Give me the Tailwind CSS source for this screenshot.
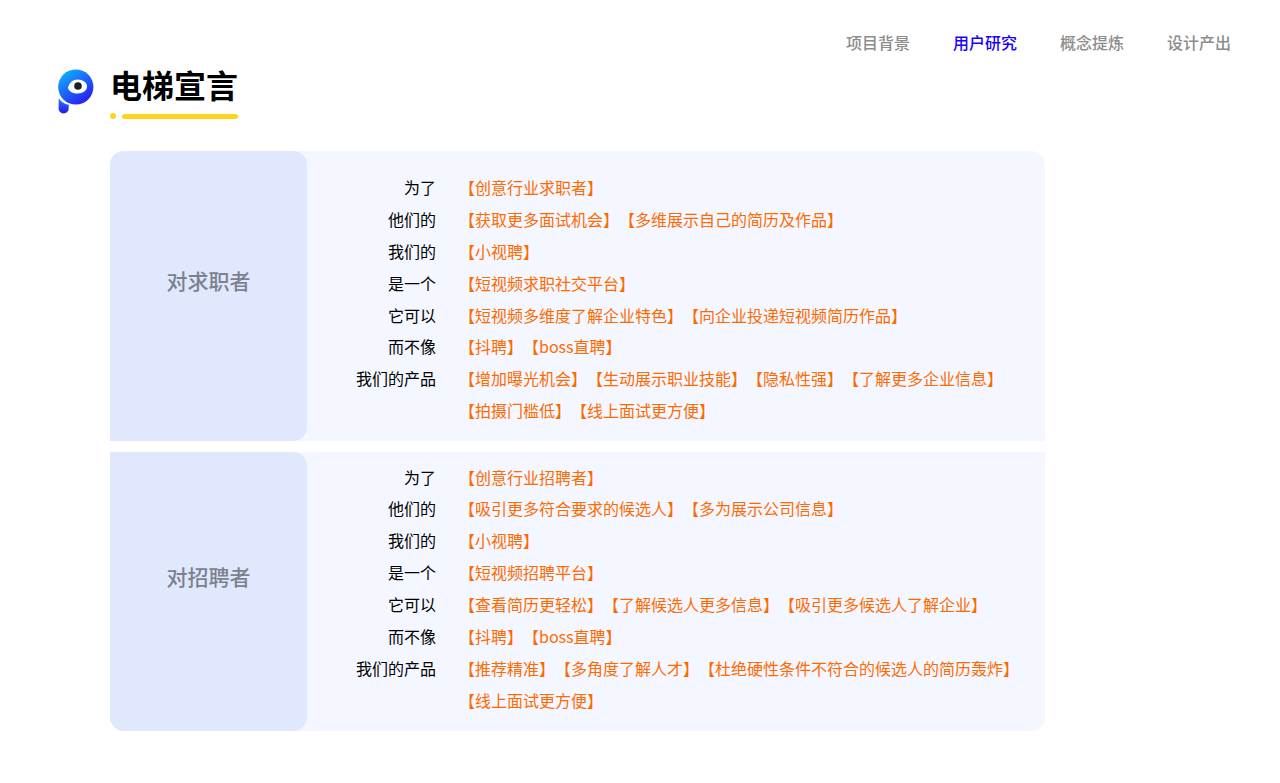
<!DOCTYPE html>
<html lang="zh">
<head>
  <meta charset="UTF-8" />
  <meta name="viewport" content="width=device-width, initial-scale=1.0" />
  <title>电梯宣言</title>
  <script src="https://cdn.jsdelivr.net/npm/@tailwindcss/browser@4"></script>
</head>
<body class="bg-white min-h-screen font-['Noto_Sans_CJK_SC',sans-serif] [text-spacing-trim:space-all] overflow-hidden">
  <nav class="flex justify-end gap-[43px] pt-[30px] pr-[49px] text-base leading-6 font-medium text-[#8c8c8c]">
    <a>项目背景</a>
    <a class="text-[#1a00ff]">用户研究</a>
    <a>概念提炼</a>
    <a>设计产出</a>
  </nav>

  <header class="flex items-start mt-[4px] pl-[58px]">
    <svg class="w-9 h-[46px] mt-[11px]" viewBox="0 0 36 46">
      <defs>
        <linearGradient id="logo" x1="0.15" y1="0" x2="0.85" y2="1">
          <stop offset="0" stop-color="#0fb4ff" />
          <stop offset="1" stop-color="#2a10f0" />
        </linearGradient>
        <linearGradient id="stem" x1="0" y1="0" x2="0" y2="1">
          <stop offset="0" stop-color="#1c8cff" />
          <stop offset="1" stop-color="#2a10e8" />
        </linearGradient>
      </defs>
      <circle cx="17.8" cy="18" r="17.6" fill="url(#logo)" />
      <path d="M0.3 28.5C2.5 32 6.2 34.8 11 35.6V39.3C11 42.4 8.7 44.7 5.6 44.7C2.6 44.7 0.3 42.4 0.3 39.3Z" fill="url(#stem)" stroke="#fff" stroke-width="0.6" />
      <path d="M10 19C11 13.5 15 10.5 19.5 10.5C24.8 10.5 29 13.6 29 17.5C29 21.6 24.8 24.5 19.5 24.5C15 24.5 11.5 23 10 19Z" fill="#fff" />
      <circle cx="20" cy="17" r="3.8" fill="#1c1c2a" />
    </svg>
    <div class="ml-4 w-[128px]">
      <h1 class="text-[32px] leading-[44px] font-bold text-black mt-[4px] whitespace-nowrap">电梯宣言</h1>
      <div class="flex items-center gap-[6px] mt-[7px]">
        <span class="w-[6px] h-[6px] rounded-full bg-[#ffd21f]"></span>
        <span class="w-[116px] h-[5px] rounded-full bg-[#ffd21f]"></span>
      </div>
    </div>
  </header>

  <main class="ml-[110px] w-[935px] mt-[32px] flex flex-col gap-[11px]">
    <section class="flex h-[290px] bg-[#f4f7ff] rounded-t-[14px]">
      <div class="w-[197px] pb-[30px] flex items-center justify-center bg-[#e0e8fd] rounded-tl-[14px] rounded-tr-[14px] rounded-br-[14px] text-[21px] font-medium text-[#7c818e]">对求职者</div>
      <div class="pt-[20px] grid grid-cols-[129px_1fr] gap-x-[23px] auto-rows-[31.9px] text-base leading-8 h-fit">
        <span class="text-right text-black">为了</span>
        <span class="text-[#ff6a00]">【创意行业求职者】</span>
        <span class="text-right text-black">他们的</span>
        <span class="text-[#ff6a00]">【获取更多面试机会】【多维展示自己的简历及作品】</span>
        <span class="text-right text-black">我们的</span>
        <span class="text-[#ff6a00]">【小视聘】</span>
        <span class="text-right text-black">是一个</span>
        <span class="text-[#ff6a00]">【短视频求职社交平台】</span>
        <span class="text-right text-black">它可以</span>
        <span class="text-[#ff6a00]">【短视频多维度了解企业特色】【向企业投递短视频简历作品】</span>
        <span class="text-right text-black">而不像</span>
        <span class="text-[#ff6a00]">【抖聘】【boss直聘】</span>
        <span class="text-right text-black">我们的产品</span>
        <span class="text-[#ff6a00]">【增加曝光机会】【生动展示职业技能】【隐私性强】【了解更多企业信息】</span>
        <span></span>
        <span class="text-[#ff6a00]">【拍摄门槛低】【线上面试更方便】</span>
      </div>
    </section>

    <section class="flex h-[279px] bg-[#f4f7ff] rounded-b-[14px]">
      <div class="w-[197px] pb-[30px] flex items-center justify-center bg-[#e0e8fd] rounded-tr-[14px] rounded-br-[14px] rounded-bl-[14px] text-[21px] font-medium text-[#7c818e]">对招聘者</div>
      <div class="pt-[8.6px] grid grid-cols-[129px_1fr] gap-x-[23px] auto-rows-[31.9px] text-base leading-8 h-fit">
        <span class="text-right text-black">为了</span>
        <span class="text-[#ff6a00]">【创意行业招聘者】</span>
        <span class="text-right text-black">他们的</span>
        <span class="text-[#ff6a00]">【吸引更多符合要求的候选人】【多为展示公司信息】</span>
        <span class="text-right text-black">我们的</span>
        <span class="text-[#ff6a00]">【小视聘】</span>
        <span class="text-right text-black">是一个</span>
        <span class="text-[#ff6a00]">【短视频招聘平台】</span>
        <span class="text-right text-black">它可以</span>
        <span class="text-[#ff6a00]">【查看简历更轻松】【了解候选人更多信息】【吸引更多候选人了解企业】</span>
        <span class="text-right text-black">而不像</span>
        <span class="text-[#ff6a00]">【抖聘】【boss直聘】</span>
        <span class="text-right text-black">我们的产品</span>
        <span class="text-[#ff6a00]">【推荐精准】【多角度了解人才】【杜绝硬性条件不符合的候选人的简历轰炸】</span>
        <span></span>
        <span class="text-[#ff6a00]">【线上面试更方便】</span>
      </div>
    </section>
  </main>
</body>
</html>
